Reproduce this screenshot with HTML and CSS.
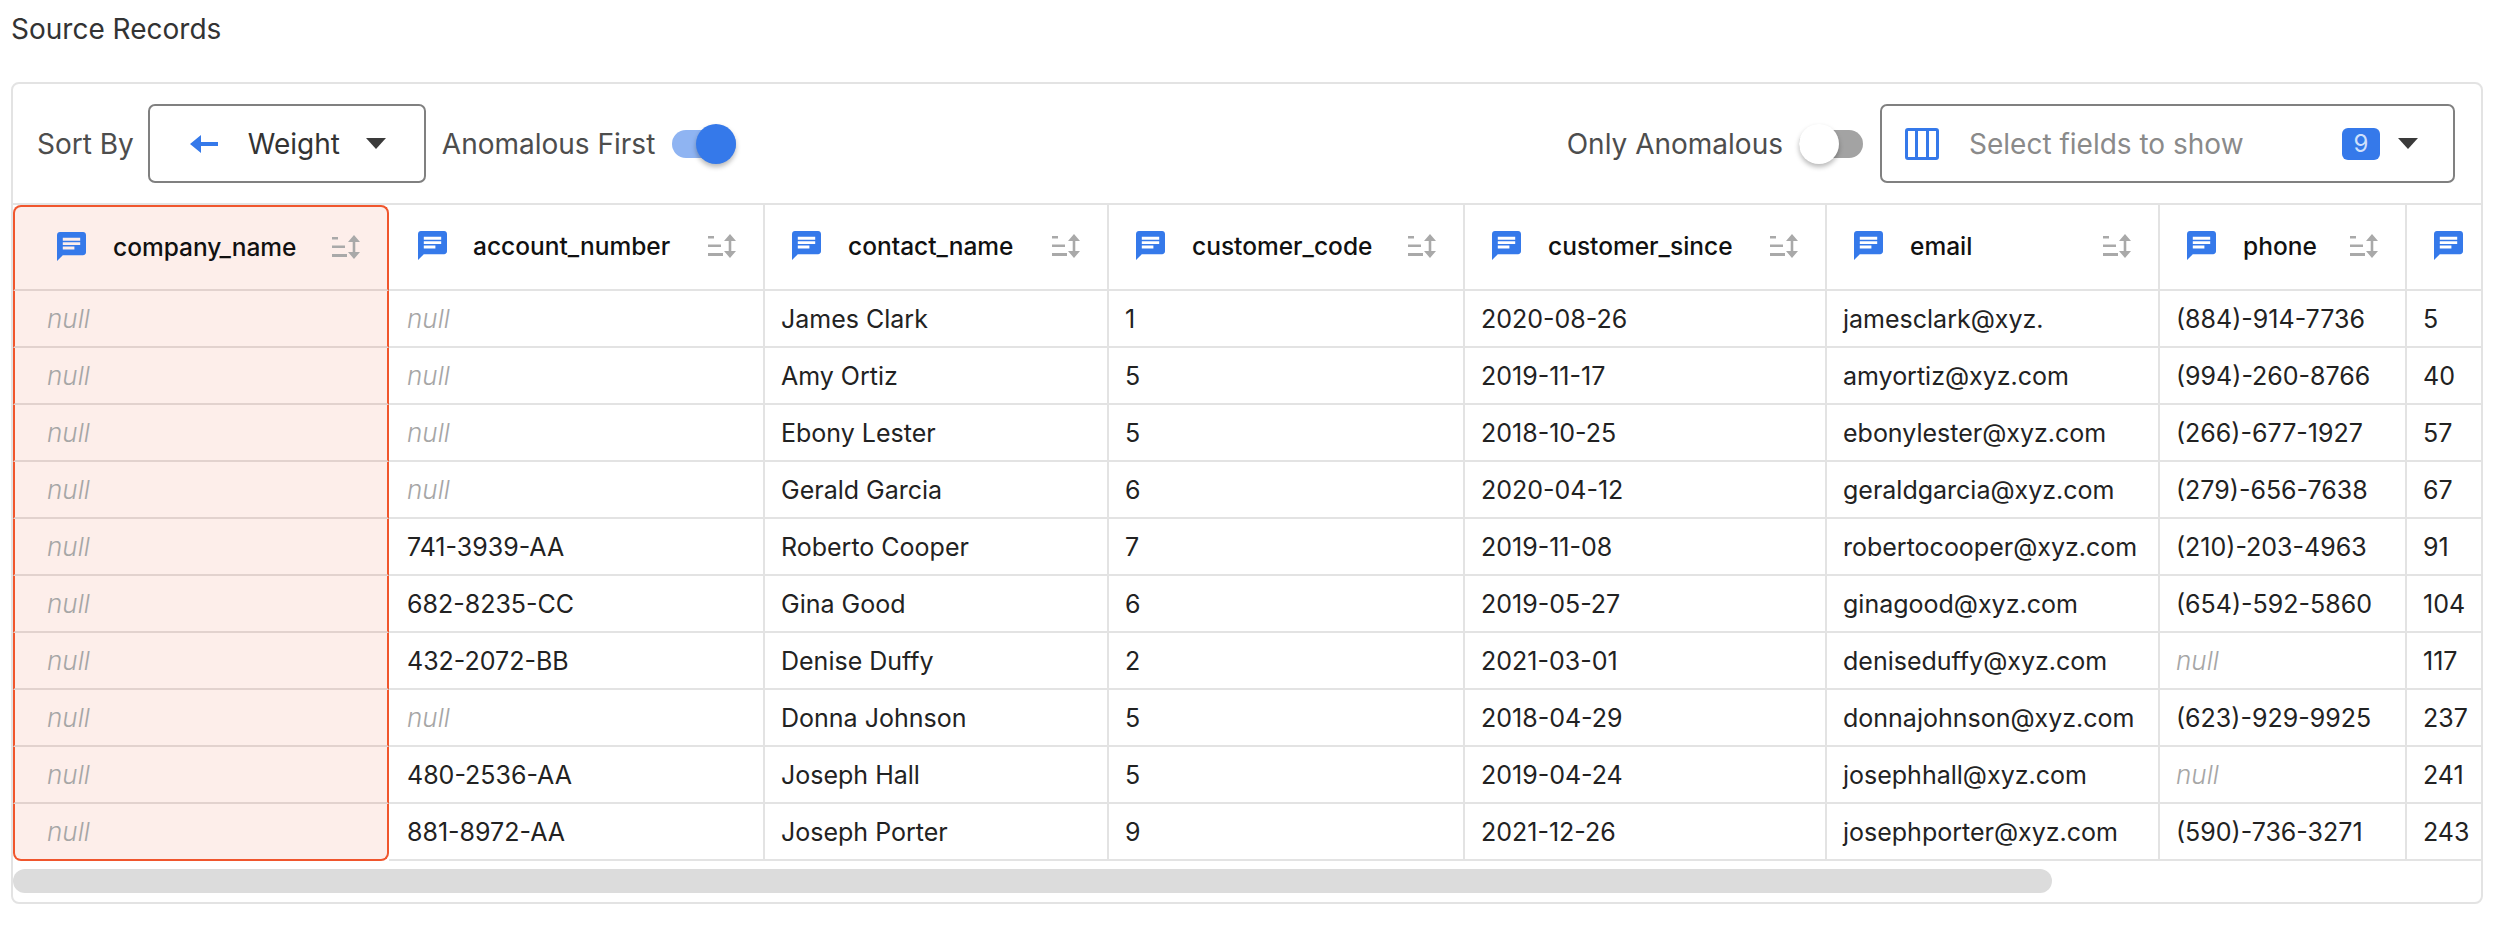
FILE: index.html
```html
<!DOCTYPE html>
<html lang="en">
<head>
    <meta charset="UTF-8">
    <title>Source Records</title>
    <link rel="stylesheet" href="styles.css">
</head>
<body>
    <svg class="defs" width="0" height="0">
        <symbol id="chat" viewBox="2 2 20 20">
            <path d="M20 2H4c-1.1 0-1.99.9-1.99 2L2 22l4-4h14c1.1 0 2-.9 2-2V4c0-1.1-.9-2-2-2zM6 9h12v2H6V9zm8 5H6v-2h8v2zm4-6H6V6h12v2z"/>
        </symbol>
        <symbol id="sort" viewBox="0 0 28 24">
            <path d="M0 2h6v2.500H0zM0 10.500h13V13H0zM0 19h15v3H0z"/>
            <path d="M21 0l6 7h-4.700v10H27l-6 7-6-7h4.700V7H15z" transform="translate(1 0)"/>
        </symbol>
    </svg>

    <h2 class="title">Source Records</h2>

    <div class="card">
        <div class="toolbar">
            <span class="label">Sort By</span>
            <div class="select sort-select">
                <svg class="arrow" width="28" height="20" viewBox="0 0 28 20"><path d="M11 1L0 10l11 9v-7h17V8H11z"/></svg>
                <span class="select-text">Weight</span>
                <span class="caret"></span>
            </div>
            <span class="label first-label">Anomalous First</span>
            <div class="toggle on"><span class="thumb"></span></div>

            <span class="label only-label">Only Anomalous</span>
            <div class="toggle off"><span class="thumb"></span></div>
            <div class="select fields-select">
                <svg class="columns" width="34" height="32" viewBox="0 0 34 32"><path d="M3 0h28a3 3 0 0 1 3 3v26a3 3 0 0 1-3 3H3a3 3 0 0 1-3-3V3a3 3 0 0 1 3-3zm0 3v26h7V3zm10 0v26h8V3zm11 0v26h7V3z" fill-rule="evenodd"/></svg>
                <span class="placeholder">Select fields to show</span>
                <span class="badge">9</span>
                <span class="caret"></span>
            </div>
        </div>

        <div class="table-wrap">
            <table class="records">
                <colgroup>
                    <col class="c1"><col class="c2"><col class="c3"><col class="c4"><col class="c5"><col class="c6"><col class="c7"><col class="c8">
                </colgroup>
                <thead>
                    <tr>
                        <th class="flag"><div class="head"><svg class="chat"><use href="#chat"/></svg><span class="name">company_name</span><svg class="sort"><use href="#sort"/></svg></div></th>
                        <th class="second"><div class="head"><svg class="chat"><use href="#chat"/></svg><span class="name">account_number</span><svg class="sort"><use href="#sort"/></svg></div></th>
                        <th><div class="head"><svg class="chat"><use href="#chat"/></svg><span class="name">contact_name</span><svg class="sort"><use href="#sort"/></svg></div></th>
                        <th><div class="head"><svg class="chat"><use href="#chat"/></svg><span class="name">customer_code</span><svg class="sort"><use href="#sort"/></svg></div></th>
                        <th><div class="head"><svg class="chat"><use href="#chat"/></svg><span class="name">customer_since</span><svg class="sort"><use href="#sort"/></svg></div></th>
                        <th><div class="head"><svg class="chat"><use href="#chat"/></svg><span class="name">email</span><svg class="sort"><use href="#sort"/></svg></div></th>
                        <th><div class="head"><svg class="chat"><use href="#chat"/></svg><span class="name">phone</span><svg class="sort"><use href="#sort"/></svg></div></th>
                        <th><div class="head"><svg class="chat"><use href="#chat"/></svg></div></th>
                    </tr>
                </thead>
                <tbody>
                    <tr><td class="flag null">null</td><td class="second null">null</td><td>James Clark</td><td>1</td><td>2020-08-26</td><td>jamesclark@xyz.</td><td>(884)-914-7736</td><td>5</td></tr>
                    <tr><td class="flag null">null</td><td class="second null">null</td><td>Amy Ortiz</td><td>5</td><td>2019-11-17</td><td>amyortiz@xyz.com</td><td>(994)-260-8766</td><td>40</td></tr>
                    <tr><td class="flag null">null</td><td class="second null">null</td><td>Ebony Lester</td><td>5</td><td>2018-10-25</td><td>ebonylester@xyz.com</td><td>(266)-677-1927</td><td>57</td></tr>
                    <tr><td class="flag null">null</td><td class="second null">null</td><td>Gerald Garcia</td><td>6</td><td>2020-04-12</td><td>geraldgarcia@xyz.com</td><td>(279)-656-7638</td><td>67</td></tr>
                    <tr><td class="flag null">null</td><td class="second">741-3939-AA</td><td>Roberto Cooper</td><td>7</td><td>2019-11-08</td><td>robertocooper@xyz.com</td><td>(210)-203-4963</td><td>91</td></tr>
                    <tr><td class="flag null">null</td><td class="second">682-8235-CC</td><td>Gina Good</td><td>6</td><td>2019-05-27</td><td>ginagood@xyz.com</td><td>(654)-592-5860</td><td>104</td></tr>
                    <tr><td class="flag null">null</td><td class="second">432-2072-BB</td><td>Denise Duffy</td><td>2</td><td>2021-03-01</td><td>deniseduffy@xyz.com</td><td class="null">null</td><td>117</td></tr>
                    <tr><td class="flag null">null</td><td class="second null">null</td><td>Donna Johnson</td><td>5</td><td>2018-04-29</td><td>donnajohnson@xyz.com</td><td>(623)-929-9925</td><td>237</td></tr>
                    <tr><td class="flag null">null</td><td class="second">480-2536-AA</td><td>Joseph Hall</td><td>5</td><td>2019-04-24</td><td>josephhall@xyz.com</td><td class="null">null</td><td>241</td></tr>
                    <tr><td class="flag null">null</td><td class="second">881-8972-AA</td><td>Joseph Porter</td><td>9</td><td>2021-12-26</td><td>josephporter@xyz.com</td><td>(590)-736-3271</td><td>243</td></tr>
                </tbody>
            </table>
        </div>

        <div class="scroll-track"><div class="scroll-thumb"></div></div>
    </div>
</body>
</html>
```

FILE: styles.css
```css
* { box-sizing: border-box; }
html, body { height: 100%; }
body { margin: 0; padding: 0 13px 0 11px; background: #fff; font-family: "Inter", "Liberation Sans", sans-serif; font-size: 25px; color: #222; overflow: hidden; }
.defs { position: absolute; }

.title { margin: 0; height: 82px; padding-top: 12px; font-size: 28px; line-height: 34px; font-weight: 400; color: #333; }

.card { height: 822px; border: 2px solid #e3e3e3; border-radius: 8px; overflow: hidden; }

.toolbar { display: flex; align-items: center; height: 121px; padding: 0 26px 0 24px; border-bottom: 2px solid #e3e3e3; }
.label { font-size: 28px; color: #4d4d4d; white-space: nowrap; }
.first-label { margin: 0 17px 0 16px; }
.only-label { margin-left: auto; margin-right: 16px; }

.select { display: flex; align-items: center; height: 79px; border: 2px solid #808080; border-radius: 7px; background: #fff; }
.sort-select { width: 278px; margin-left: 14px; padding-left: 40px; flex: none; }
.sort-select .select-text { margin-left: 30px; font-size: 28px; color: #333; }
.sort-select .caret { margin-left: 26px; }
.fields-select { width: 575px; margin-left: 17px; padding-left: 23px; flex: none; }
.arrow { fill: #3579ea; flex: none; }
.columns { fill: #3579ea; flex: none; }
.placeholder { margin-left: 30px; font-size: 28px; color: #8a8a8a; }
.badge { display: flex; align-items: center; justify-content: center; width: 38px; height: 32px; margin-left: auto; border-radius: 6px; background: #3579ea; color: #cfe0fb; font-size: 24px; }
.fields-select .caret { margin: 0 35px 0 18px; }
.caret { width: 0; height: 0; border-left: 10px solid transparent; border-right: 10px solid transparent; border-top: 11px solid #3a3a3a; flex: none; }

.toggle { position: relative; width: 64px; height: 28px; border-radius: 14px; flex: none; }
.toggle.on { background: #8fb4f2; }
.toggle.off { background: #a3a3a3; }
.thumb { position: absolute; top: -6px; width: 40px; height: 40px; border-radius: 50%; box-shadow: 0 3px 5px rgba(0,0,0,0.28); }
.toggle.on .thumb { right: 0; background: #3579ea; }
.toggle.off .thumb { left: 0; background: #fff; }

.table-wrap { overflow: hidden; }
.records { table-layout: fixed; width: 2594px; border-collapse: separate; border-spacing: 0; }
.c1 { width: 376px; } .c2 { width: 376px; } .c3 { width: 344px; } .c4 { width: 356px; }
.c5 { width: 362px; } .c6 { width: 333px; } .c7 { width: 247px; } .c8 { width: 200px; }

.records th, .records td { padding: 0 12px 0 16px; border-right: 2px solid #e3e3e3; border-bottom: 2px solid #e3e3e3; text-align: left; white-space: nowrap; overflow: hidden; }
.records th { height: 86px; padding-left: 27px; padding-bottom: 3px; font-weight: 500; }
.records th.second { padding-left: 29px; }
.records td { height: 57px; font-size: 25px; color: #222; }
.records td.second { padding-left: 18px; }

.head { display: flex; align-items: center; }
.chat { width: 29px; height: 29px; fill: #3579ea; flex: none; }
.name { margin-left: 27px; font-size: 24.500px; color: #111; }
.second .name { margin-left: 26px; }
.sort { width: 28px; height: 24px; margin-left: auto; margin-right: 15px; fill: #a9a9a9; flex: none; }

.null { font-style: italic; font-weight: 300; }
.records td.null { color: #a6a6a6; font-size: 26px; }

.records th.flag, .records td.flag { background: #fdeeea; border-left: 2px solid #f0562d; border-right: 2px solid #f0562d; border-bottom-color: #e2d2ce; }
.records th.flag { border-top: 2px solid #f0562d; border-top-left-radius: 8px; border-top-right-radius: 8px; padding-left: 42px; }
.records td.flag { padding-left: 32px; }
.records tr:last-child td.flag { border-bottom-color: #f0562d; border-bottom-left-radius: 8px; border-bottom-right-radius: 8px; }

.scroll-track { padding: 8px 0 0; }
.scroll-thumb { width: 2039px; height: 24px; border-radius: 12px; background: #dcdcdc; }
```
